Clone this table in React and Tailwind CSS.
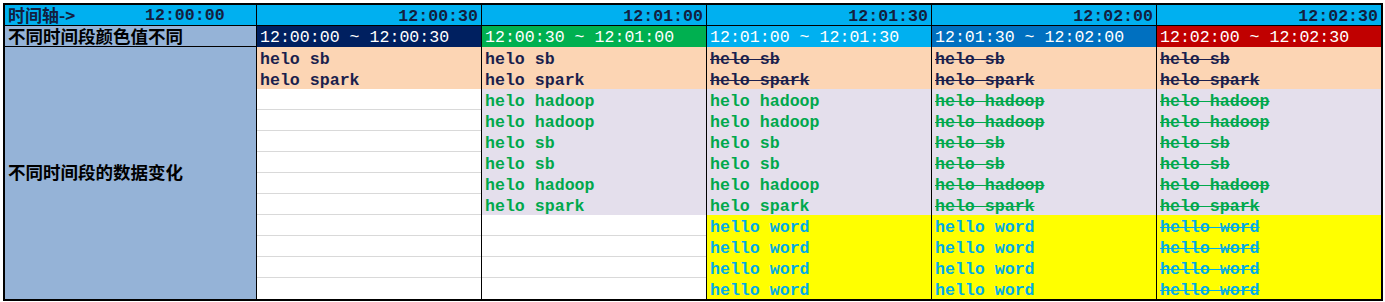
import React from "react";

const mono = { fontFamily: '"Liberation Mono", "DejaVu Sans Mono", monospace' };
const cjk = { fontFamily: '"Noto Sans CJK SC", "Noto Sans", sans-serif' };

const rangeBg = ["bg-[#002060]", "bg-[#00B050]", "bg-[#00B0F0]", "bg-[#0070C0]", "bg-[#C00000]"];
const times = ["12:00:30", "12:01:00", "12:01:30", "12:02:00", "12:02:30"];
const ranges = [
  "12:00:00 ~ 12:00:30",
  "12:00:30 ~ 12:01:00",
  "12:01:00 ~ 12:01:30",
  "12:01:30 ~ 12:02:00",
  "12:02:00 ~ 12:02:30",
];

const A = ["helo sb", "helo spark"];
const B = ["helo hadoop", "helo hadoop", "helo sb", "helo sb", "helo hadoop", "helo spark"];
const C = ["hello word", "hello word", "hello word", "hello word"];

// 0 = empty white cell, 1 = shown, 2 = struck through
const plan = [
  [1, 0, 0],
  [1, 1, 0],
  [2, 1, 1],
  [2, 2, 1],
  [2, 2, 2],
];

const groupStyle = [
  { bg: "bg-[#FCD5B4]", text: "text-[#1b1f4d]" },
  { bg: "bg-[#E4DFEC]", text: "text-[#00A84C]" },
  { bg: "bg-[#FFFF00]", text: "text-[#00ACE8]" },
];

function Cell({ text, state, g, last }) {
  if (state === 0) {
    return <div className={`h-[21px] bg-white ${last ? "" : "border-b border-[#d9d9d9]"}`} />;
  }
  const s = groupStyle[g];
  return (
    <div className={`h-[21px] ${s.bg} flex items-start pt-[5px] pl-[3px]`}>
      <span
        className={`${s.text} text-[16.6px] font-bold leading-none whitespace-pre ${state === 2 ? "line-through" : ""}`}
        style={mono}
      >
        {text}
      </span>
    </div>
  );
}

function DataColumn({ i }) {
  const p = plan[i];
  const rows = [
    ...A.map((t) => ({ t, g: 0 })),
    ...B.map((t) => ({ t, g: 1 })),
    ...C.map((t) => ({ t, g: 2 })),
  ];
  return (
    <div className={`flex flex-col ${i < 4 ? "w-[225px] border-r border-black" : "w-[224px]"}`}>
      <div className="h-[21px] bg-[#00B0F0] border-b border-black flex items-start justify-end pt-[4px] pr-[3px]">
        <span className="text-[16.6px] font-bold text-[#13203f] leading-none" style={mono}>
          {times[i]}
        </span>
      </div>
      <div className={`h-[21px] ${rangeBg[i]} flex items-start pt-[4px] pl-[3px]`}>
        <span className="text-[16.6px] text-white leading-none whitespace-pre" style={mono}>
          {ranges[i]}
        </span>
      </div>
      {rows.map((r, k) => (
        <Cell key={k} text={r.t} state={p[r.g]} g={r.g} last={k === rows.length - 1} />
      ))}
    </div>
  );
}

export default function App() {
  return (
    <div className="w-[1385px] h-[302px] bg-white pt-[3px] pl-[3px]">
      <div className="w-[1380px] border-2 border-black flex">
        <div className="w-[252px] border-r border-black flex flex-col bg-[#95B3D7]">
          <div className="h-[21px] bg-[#00B0F0] border-b border-black flex items-center pl-[3px]">
            <span className="w-[137px] text-[17px] font-bold text-[#13203f] leading-[18px]" style={cjk}>
              时间轴-&gt;
            </span>
            <span className="text-[16.6px] font-bold text-[#13203f] leading-none pt-[2px]" style={mono}>
              12:00:00
            </span>
          </div>
          <div className="h-[21px] border-b border-black flex items-center pl-[3px]">
            <span className="text-[17.5px] font-bold text-black leading-[18px]" style={cjk}>
              不同时间段颜色值不同
            </span>
          </div>
          <div className="flex-1 flex items-center pl-[3px] pb-[3px]">
            <span className="text-[17.5px] font-bold text-black leading-[20px]" style={cjk}>
              不同时间段的数据变化
            </span>
          </div>
        </div>
        {[0, 1, 2, 3, 4].map((i) => (
          <DataColumn key={i} i={i} />
        ))}
      </div>
    </div>
  );
}
